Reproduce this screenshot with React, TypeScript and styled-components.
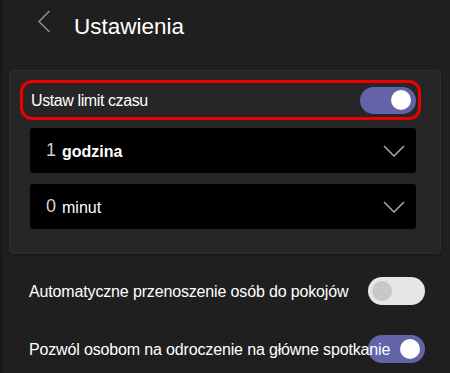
import React from "react";
import styled, { createGlobalStyle } from "styled-components";

const Global = createGlobalStyle`
  html, body { margin: 0; padding: 0; background: #1f1f1f; }
  body { font-family: "Liberation Sans", Arial, sans-serif; color: #fff; }
`;

const Page = styled.div`
  width: 450px;
  height: 373px;
  box-sizing: border-box;
  background: #1f1f1f;
  border-left: 3px solid #191919;
  overflow: hidden;
`;

const Header = styled.div`
  display: flex;
  align-items: center;
  height: 42px;
  padding: 0 0 0 34px;
  gap: 23px;
  margin-bottom: 28px;
`;

const BackIcon = styled.svg`
  width: 14px;
  height: 23px;
  flex-shrink: 0;
`;

const Title = styled.h1`
  margin: 0;
  font-size: 22.5px;
  font-weight: 400;
  line-height: 1;
  color: #fff;
  padding-top: 13px;
`;

const Panel = styled.section`
  margin-left: 6px;
  width: 432px;
  box-sizing: border-box;
  background: #262626;
  border: 1px solid #2e2e2e;
  border-radius: 4px;
  padding: 9px 19px 24px 10px;
  box-shadow: 0 1px 2px rgba(0, 0, 0, 0.35);
`;

const Highlighted = styled.div`
  display: flex;
  align-items: center;
  justify-content: space-between;
  height: 40px;
  box-sizing: border-box;
  border: 3px solid #ee0000;
  border-radius: 12px;
  padding: 0 2px 0 8px;
`;

const Label = styled.span<{ $tight?: boolean }>`
  font-size: 16px;
  color: #fff;
  white-space: nowrap;
  letter-spacing: ${(p) => (p.$tight ? "-0.4px" : "-0.15px")};
  position: relative;
  z-index: 1;
  flex: 1;
  min-width: 0;
  padding-top: 2px;
`;

const Selects = styled.div`
  display: flex;
  flex-direction: column;
  gap: 11px;
  margin: 8px 5px 0 10px;
`;

const Select = styled.div`
  display: flex;
  align-items: center;
  height: 45px;
  background: #000;
  border-radius: 3px;
  padding: 0 11px 0 16px;
`;

const Num = styled.span`
  font-size: 18px;
  color: #d0d0d0;
  margin-right: 6px;
`;

const Unit = styled.span<{ $bold?: boolean }>`
  font-size: 16px;
  font-weight: ${(p) => (p.$bold ? 700 : 400)};
  color: #fff;
  flex: 1;
  padding-top: 2px;
`;

const Chevron = styled.svg`
  width: 22px;
  height: 12px;
`;

const Rows = styled.div`
  display: flex;
  flex-direction: column;
  margin-top: 8px;
  padding: 0 25px 0 26px;
`;

const Row = styled.div`
  display: flex;
  align-items: center;
  height: 58px;
`;

const Track = styled.div<{ $on: boolean; $small?: boolean }>`
  position: relative;
  width: ${(p) => (p.$small ? 56 : 57)}px;
  height: ${(p) => (p.$small ? 27 : 28)}px;
  flex-shrink: 0;
  border-radius: 14px;
  background: ${(p) => (p.$on ? "#6264a7" : "#e6e6e6")};
`;

const Knob = styled.div<{ $on: boolean }>`
  position: absolute;
  top: 50%;
  transform: translateY(-50%);
  ${(p) => (p.$on ? "right: 5px;" : "left: 4px;")}
  width: 20px;
  height: 20px;
  border-radius: 50%;
  background: ${(p) => (p.$on ? "#ffffff" : "#c8c8c8")};
`;

const Toggle = ({ on, small }: { on: boolean; small?: boolean }) => (
  <Track $on={on} $small={small}>
    <Knob $on={on} />
  </Track>
);

const Down = () => (
  <Chevron viewBox="0 0 22 12">
    <polyline points="1,1 11,11 21,1" fill="none" stroke="#a3a3a3" strokeWidth="1.6" />
  </Chevron>
);

export default function App() {
  return (
    <Page>
      <Global />
      <Header>
        <BackIcon viewBox="0 0 14 23">
          <polyline points="12.5,1 2,11.5 12.5,22" fill="none" stroke="#8c8c8c" strokeWidth="1.6" />
        </BackIcon>
        <Title>Ustawienia</Title>
      </Header>
      <Panel>
        <Highlighted>
          <Label $tight>Ustaw limit czasu</Label>
          <Toggle on small />
        </Highlighted>
        <Selects>
          <Select>
            <Num>1</Num>
            <Unit $bold>godzina</Unit>
            <Down />
          </Select>
          <Select>
            <Num>0</Num>
            <Unit>minut</Unit>
            <Down />
          </Select>
        </Selects>
      </Panel>
      <Rows>
        <Row>
          <Label>Automatyczne przenoszenie osób do pokojów</Label>
          <Toggle on={false} />
        </Row>
        <Row>
          <Label>Pozwól osobom na odroczenie na główne spotkanie</Label>
          <Toggle on={true} />
        </Row>
      </Rows>
    </Page>
  );
}
